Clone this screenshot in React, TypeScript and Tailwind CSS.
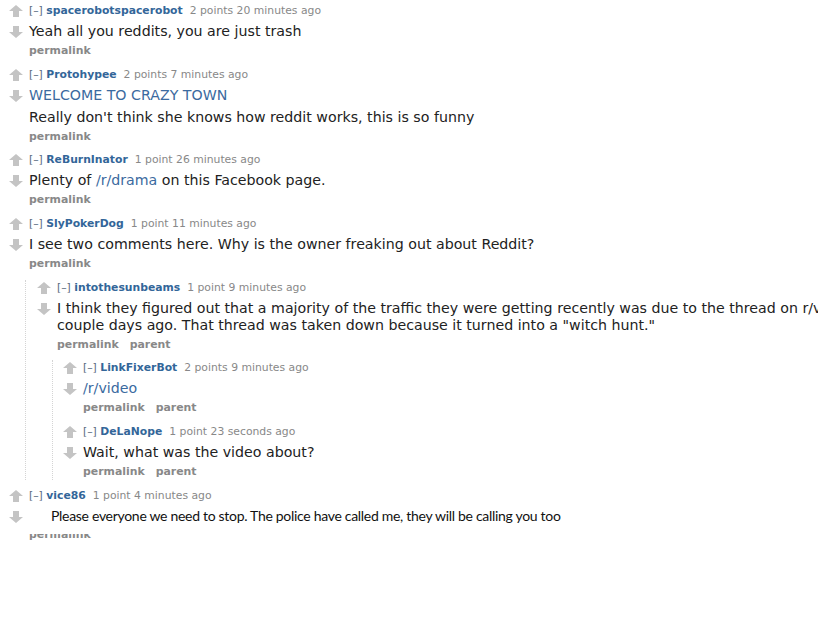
import type { ReactNode } from "react";

const Arrow = ({ down = false }: { down?: boolean }) => (
  <svg width="14" height="12" viewBox="0 0 14 12" className={down ? "rotate-180" : ""}>
    <polygon points="7,0 14,6 10,6 10,12 4,12 4,6 0,6" fill="#c4c4c4" />
  </svg>
);

const Votes = () => (
  <div className="w-[20px] shrink-0 flex flex-col">
    <div className="mt-[2px]">
      <Arrow />
    </div>
    <div className="mt-[9px]">
      <Arrow down />
    </div>
  </div>
);

const Tagline = ({ author, score, age }: { author: string; score: string; age: string }) => (
  <div className="h-[16px] leading-[16px] text-[10.8px] whitespace-nowrap text-[#888]">
    <span className="text-[#5a6a80]">[–]</span>{" "}
    <span className="font-bold text-[#369]">{author}</span>
    <span className="ml-[7px]">{score}</span> {age}
  </div>
);

type CommentProps = {
  author: string;
  score: string;
  age: string;
  body: ReactNode;
  parent?: boolean;
  children?: ReactNode;
};

const Comment = ({ author, score, age, body, parent, children }: CommentProps) => (
  <div>
    <div className="flex mb-[7.7px]">
      <Votes />
      <div className="flex flex-col">
        <Tagline author={author} score={score} age={age} />
        <div className="mt-[4px] text-[14.2px] leading-[17px] text-[#222] whitespace-nowrap">{body}</div>
        <div className="mt-[3px] h-[16px] leading-[16px] text-[10.9px] font-bold text-[#888] flex gap-[11px]">
          <span>permalink</span>
          {parent && <span>parent</span>}
        </div>
      </div>
    </div>
    {children}
  </div>
);

export default function App() {
  return (
    <div className="w-[818px] h-[631px] overflow-hidden bg-white pt-[3px] pl-[9px] font-['DejaVu_Sans',Verdana,sans-serif]">
      <Comment author="spacerobotspacerobot" score="2 points" age="20 minutes ago" body="Yeah all you reddits, you are just trash" />
      <Comment
        author="Protohypee"
        score="2 points"
        age="7 minutes ago"
        body={
          <>
            <p className="text-[#3b6aa0]">WELCOME TO CRAZY TOWN</p>
            <p className="mt-[5px]">Really don't think she knows how reddit works, this is so funny</p>
          </>
        }
      />
      <Comment
        author="ReBurnInator"
        score="1 point"
        age="26 minutes ago"
        body={
          <>
            Plenty of <span className="text-[#3b6aa0]">/r/drama</span> on this Facebook page.
          </>
        }
      />
      <Comment author="SlyPokerDog" score="1 point" age="11 minutes ago" body="I see two comments here. Why is the owner freaking out about Reddit?">
        <div className="ml-[16px] pl-[11px] border-l border-dotted border-[#d4d4d4]">
          <Comment
            author="intothesunbeams"
            score="1 point"
            age="9 minutes ago"
            parent
            body={
              <>
                I think they figured out that a majority of the traffic they were getting recently was due to the thread on r/videos a
                <br />
                couple days ago. That thread was taken down because it turned into a "witch hunt."
              </>
            }
          >
            <div className="ml-[15px] pl-[10px] border-l border-dotted border-[#d4d4d4]">
              <Comment
                author="LinkFixerBot"
                score="2 points"
                age="9 minutes ago"
                parent
                body={<span className="text-[#3b6aa0]">/r/video</span>}
              />
              <Comment author="DeLaNope" score="1 point" age="23 seconds ago" parent body="Wait, what was the video about?" />
            </div>
          </Comment>
        </div>
      </Comment>
      <div className="flex">
        <Votes />
        <div className="flex flex-col">
          <Tagline author="vice86" score="1 point" age="4 minutes ago" />
          <div className="mt-[3px] pl-[22px] text-[14px] leading-[17px] tracking-[-0.3px] text-[#111] whitespace-nowrap font-['Lato',sans-serif]">
            Please everyone we need to stop. The police have called me, they will be calling you too
          </div>
          <div className="mt-[10px] h-[9px] overflow-hidden">
            <div className="-mt-[7px] leading-[16px] text-[10.9px] font-bold text-[#888]">permalink</div>
          </div>
        </div>
      </div>
    </div>
  );
}
